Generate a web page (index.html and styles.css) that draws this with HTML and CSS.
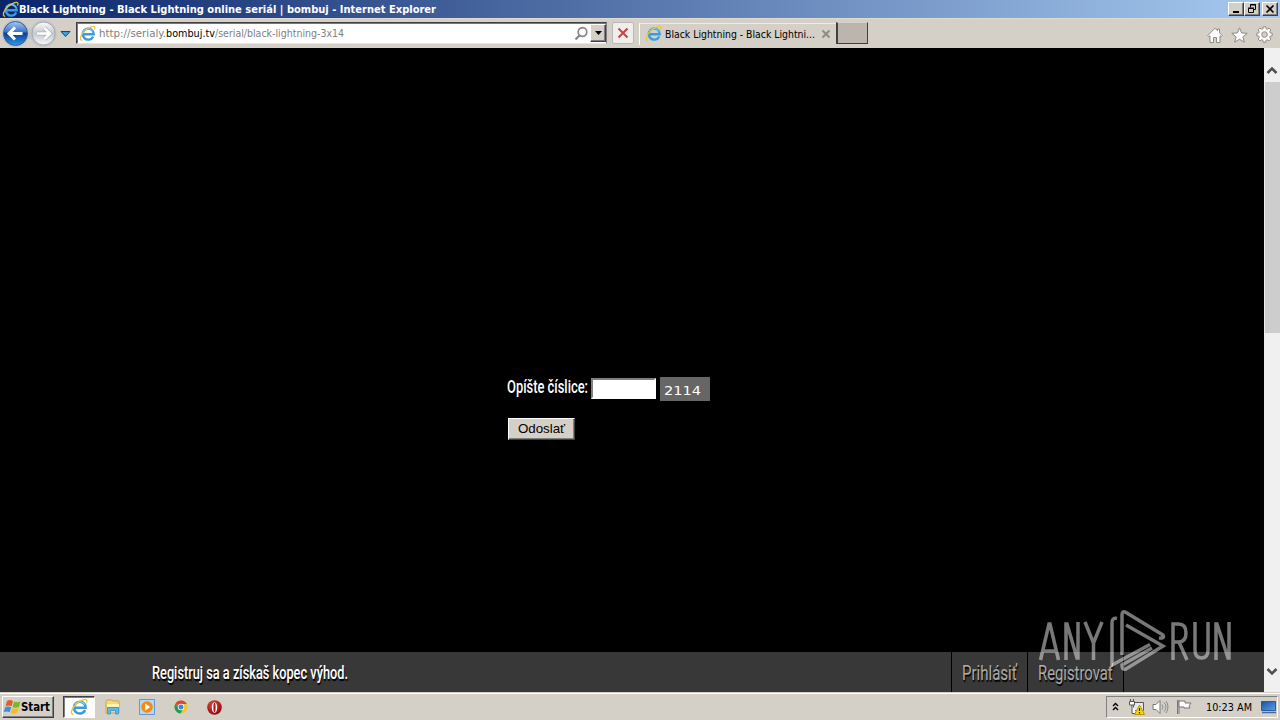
FILE: index.html
```html
<!DOCTYPE html>
<html lang="sk">
<head>
    <meta charset="UTF-8">
    <meta name="viewport" content="width=device-width, initial-scale=1.0">
    <title>Black Lightning - Black Lightning online seriál | bombuj</title>
    <link rel="stylesheet" href="styles.css">
</head>
<body>
    <svg class="defs" width="0" height="0">
        <linearGradient id="blueBall" x1="0" y1="0" x2="0" y2="1">
            <stop offset="0" stop-color="#a9c8ee"/>
            <stop offset=".42" stop-color="#3f78c8"/>
            <stop offset=".5" stop-color="#0b3f98"/>
            <stop offset="1" stop-color="#2b9bea"/>
        </linearGradient>
        <linearGradient id="grayBall" x1="0" y1="0" x2="0" y2="1">
            <stop offset="0" stop-color="#fafbfc"/>
            <stop offset=".5" stop-color="#c3c9d1"/>
            <stop offset="1" stop-color="#f8f9fa"/>
        </linearGradient>
        <linearGradient id="screen" x1="0" y1="0" x2="1" y2="1">
            <stop offset="0" stop-color="#1d4f9f"/>
            <stop offset="1" stop-color="#5ba0ec"/>
        </linearGradient>
        <radialGradient id="redBall" cx=".4" cy=".3" r=".7">
            <stop offset="0" stop-color="#e8483c"/>
            <stop offset="1" stop-color="#8d0a0a"/>
        </radialGradient>
        <symbol id="ie" viewBox="0 0 16 16">
            <path d="M13.400 10.800A5.200 5.200 0 1 1 13.900 8.700H4.500" fill="none" stroke="#3c9bdf" stroke-width="2.200"/>
            <path d="M13 6A5.200 5.200 0 0 0 4.200 5.600" fill="none" stroke="#8dd3f7" stroke-width=".9"/>
            <path d="M3 14.600C-.2 14.200 1.400 8.800 6 5 9.600 1.900 13.800.3 14.800 1.900c.4.700.2 1.600-.3 2.500" fill="none" stroke="#e9c63c" stroke-width="1.200"/>
        </symbol>
    </svg>

    <div class="titlebar">
        <svg class="ie-icon" width="17" height="17"><use href="#ie"/></svg>
        <svg class="title-text" width="430" height="18">
            <text x="0" y="13" textLength="417" lengthAdjust="spacingAndGlyphs">Black Lightning - Black Lightning online seriál | bombuj - Internet Explorer</text>
        </svg>
        <div class="window-buttons">
            <button class="win-btn"><svg width="14" height="12"><path d="M4 9h6" stroke="#000" stroke-width="2"/></svg></button>
            <button class="win-btn"><svg width="14" height="12"><path d="M5.500 4.500V1.500h5v5H9M5 2h6M3.500 5.500h5v4h-5zM3 5h6" fill="none" stroke="#000"/></svg></button>
            <button class="win-btn close"><svg width="14" height="12"><path d="M3.500 2.500l7 7M10.500 2.500l-7 7" stroke="#000" stroke-width="1.700"/></svg></button>
        </div>
    </div>

    <div class="toolbar">
        <svg class="nav-buttons" width="74" height="30">
            <path d="M2 15a13.500 13.500 0 0 1 26-5q1.500 2 3 0a13.500 13.500 0 1 1 0 11q-1.500-1-3 0A13.500 13.500 0 0 1 2 15" fill="#c3c4c5"/>
            <circle cx="15.500" cy="15.500" r="12" fill="url(#blueBall)" stroke="#345f9e"/>
            <path d="M22.500 15.500H10M15 9.500l-6 6 6 6" fill="none" stroke="#fff" stroke-width="3"/>
            <circle cx="43.500" cy="15.500" r="11.500" fill="url(#grayBall)" stroke="#a4a8ad"/>
            <path d="M37 15.500h12M44.500 10l5.500 5.500-5.500 5.500" fill="none" stroke="#aeb3b9" stroke-width="4"/>
            <path d="M37 15.500h12M44.500 10l5.500 5.500-5.500 5.500" fill="none" stroke="#fff" stroke-width="2.600"/>
            <path d="M61 13.500h9l-4.500 5z" fill="#37a4df" stroke="#164776"/>
        </svg>
        <div class="address">
            <svg class="ie-icon" width="17" height="17"><use href="#ie"/></svg>
            <svg class="url" width="300" height="18">
                <text x="0" y="13" textLength="67" lengthAdjust="spacingAndGlyphs">http://serialy.</text>
                <text class="host" x="67" y="13" textLength="49" lengthAdjust="spacingAndGlyphs">bombuj.tv</text>
                <text x="116" y="13" textLength="129" lengthAdjust="spacingAndGlyphs">/serial/black-lightning-3x14</text>
            </svg>
            <svg class="search" width="15" height="16"><circle cx="8.500" cy="6" r="4.300" fill="none" stroke="#858585" stroke-width="1.700"/><path d="M5.500 9.500L1.500 13.500" stroke="#858585" stroke-width="2.200"/></svg>
            <button class="dropdown"><svg width="7" height="4"><path d="M0 0h7L3.500 4z"/></svg></button>
        </div>
        <button class="stop"><svg width="12" height="12"><path d="M1.500 1.500l9 9M10.500 1.500l-9 9" stroke="#c8404a" stroke-width="2"/></svg></button>
        <div class="tab">
            <svg class="ie-icon" width="17" height="17"><use href="#ie"/></svg>
            <svg class="tab-title" width="152" height="18">
                <text x="0" y="12" textLength="150" lengthAdjust="spacingAndGlyphs">Black Lightning - Black Lightni...</text>
            </svg>
            <svg class="tab-close" width="10" height="10"><path d="M1.500 1.500l7 7M8.500 1.500l-7 7" stroke="#8f8b85" stroke-width="2"/></svg>
        </div>
        <div class="new-tab"></div>
        <div class="tools">
            <svg width="16" height="16"><path d="M.8 8.500L8 1.200l2.500 2.500V2h2v3.800l2.700 2.700-1 1.200-1.200-1v6.800H9.500v-5h-3v5H3V8.700l-1.200 1z" fill="#fff" stroke="#8e8a84"/></svg>
            <svg width="17" height="16"><path d="M8.500.8l2.100 5.100 5.600.4-4.300 3.500 1.400 5.400-4.800-3-4.800 3 1.400-5.400L.8 6.300l5.600-.4z" fill="#fff" stroke="#8e8a84"/></svg>
            <svg width="17" height="17" viewBox="0 0 17 17">
                <path d="M7.200.8h2.600l.4 2.100 1 .4L13 2.100l1.900 1.900-1.200 1.800.4 1 2.100.4v2.600l-2.100.4-.4 1 1.200 1.800-1.900 1.900-1.800-1.200-1 .4-.4 2.100H7.200l-.4-2.100-1-.4L4 14.900 2.100 13l1.200-1.800-.4-1-2.100-.4V7.200l2.100-.4.4-1L2.100 4 4 2.100l1.800 1.200 1-.4z" fill="#fff" stroke="#8e8a84"/>
                <circle cx="8.500" cy="8.500" r="2.800" fill="#d4d0c8" stroke="#8e8a84"/>
            </svg>
        </div>
    </div>

    <div class="viewport">
        <div class="page">
            <form class="captcha">
                <div class="captcha-row">
                    <svg class="label" width="84" height="26">
                        <text x="0" y="18" textLength="81" lengthAdjust="spacingAndGlyphs">Opíšte číslice:</text>
                    </svg>
                    <input type="text" class="code-input">
                    <svg class="code" width="50" height="24">
                        <text x="4" y="18" textLength="37" lengthAdjust="spacingAndGlyphs">2114</text>
                    </svg>
                </div>
                <button type="button" class="submit-btn">Odoslať</button>
            </form>
            <div class="bottom-bar">
                <svg class="promo" width="200" height="40">
                    <text x="0" y="27" textLength="196" lengthAdjust="spacingAndGlyphs">Registruj sa a získaš kopec výhod.</text>
                </svg>
                <div class="account">
                    <a class="login"><svg width="56" height="40"><text x="0" y="28" textLength="55" lengthAdjust="spacingAndGlyphs">Prihlásiť</text></svg></a>
                    <a class="register"><svg width="76" height="40"><text x="0" y="28" textLength="75" lengthAdjust="spacingAndGlyphs">Registrovať</text></svg></a>
                </div>
            </div>
            <svg class="watermark" width="196" height="66" viewBox="0 0 196 66">
                <g fill="none" stroke-width="3.500">
                    <path d="M3.500 51L12 15h1l8.500 36M6 42h13"/>
                    <path d="M29 51V15h1l10 34h1V13"/>
                    <path d="M48 13l8.500 21v17M65 13l-8.500 21"/>
                    <path d="M136 51V15h5.500q7.500 0 7.500 9t-7.500 9H136M142 33l8 18"/>
                    <path d="M158 13v28q0 8 6.500 8t6.500-8V13"/>
                    <path d="M179 51V15h1l11 34h1V13"/>
                    <path d="M80 9.500q-5-1-5 4V56l38-20.500"/>
                    <path d="M85 46V6q0-5 4-2.500l37 22.500q2 3.500-4 3"/>
                    <path d="M89 16l37 21-37 23q-4 1.500-4-4l30-17"/>
                </g>
            </svg>
        </div>
        <div class="scrollbar">
            <svg class="arrow-up" width="16" height="34"><path d="M3.500 25L8 20.500l4.500 4.500" fill="none" stroke="#505050" stroke-width="2.500"/></svg>
            <div class="thumb"></div>
            <svg class="arrow-down" width="16" height="34"><path d="M3.500 11L8 15.500l4.500-4.500" fill="none" stroke="#505050" stroke-width="2.500"/></svg>
        </div>
    </div>

    <div class="taskbar">
        <button class="start">
            <svg width="17" height="16" viewBox="0 0 17 16">
                <path d="M3 2q3-2 6 0L7.500 7.200q-3-1.500-6 0z" fill="#e65b28"/>
                <path d="M10 2.500q3 1.600 6.500 0L15 8q-3.500 1.500-6.500 0z" fill="#77b82a"/>
                <path d="M1.200 8.300q3-1.600 6 0l-1.500 5q-3-1.600-6 0z" fill="#3f8fdc"/>
                <path d="M8.200 8.900q3 1.600 6.500 0l-1.500 5q-3.500 1.600-6.500 0z" fill="#f6bd22"/>
            </svg>
            <svg width="31" height="18"><text x="0" y="13" textLength="29" lengthAdjust="spacingAndGlyphs">Start</text></svg>
        </button>
        <div class="task active"><svg width="18" height="18"><use href="#ie"/></svg></div>
        <div class="task">
            <svg width="16" height="16"><path d="M1 2.500Q1 1 3 1h4l1 1h6v12H1z" fill="#f1d87a" stroke="#c7a84a"/><path d="M2 5h12v3H2z" fill="#fff3b0"/><path d="M2.500 15V8.500h11V15h-3v-3.500h-5V15z" fill="#65b5e7" stroke="#439bd0"/></svg>
        </div>
        <div class="task">
            <svg width="16" height="16"><path d="M.5.5h15v15H.5z" fill="#b8d5f1" stroke="#5c9bd6"/><circle cx="8" cy="8" r="5.800" fill="#f58a13"/><path d="M6.200 4.500l5 3.500-5 3.500z" fill="#fff"/></svg>
        </div>
        <div class="task">
            <svg width="14" height="14" viewBox="0 0 14 14"><circle cx="7" cy="7" r="6.500" fill="#f6c62c"/><path d="M1.400 3.700A6.500 6.500 0 0 0 6.500 13.500L9 9 5 8z" fill="#24994f"/><path d="M1.400 3.700A6.500 6.500 0 0 1 12.800 4H7L5 7z" fill="#db4437"/><circle cx="7" cy="7" r="3.200" fill="#fff"/><circle cx="7" cy="7" r="2.500" fill="#4285e8"/></svg>
        </div>
        <div class="task opera">
            <svg width="15" height="15"><circle cx="7.500" cy="7.500" r="7.300" fill="url(#redBall)"/><ellipse cx="7.500" cy="7.500" rx="2.700" ry="5.300" fill="#fff"/><ellipse cx="7.500" cy="7.500" rx="1.100" ry="4.700" fill="#b51515"/></svg>
        </div>
        <div class="tray">
            <svg class="chevrons" width="7" height="10"><path d="M1 4L3.500 1.500 6 4M1 8L3.500 5.500 6 8" fill="none" stroke="#000" stroke-width="1.400"/></svg>
            <svg class="network" width="16" height="16"><path d="M4.500 3.500h10v8h-10z" fill="#e8e8e8" stroke="#555"/><path d="M.5 2.500h5v3.500h-5zM1.500 2V0M4.500 2V0M3 6v8.500h5" fill="#fff" stroke="#555"/><path d="M10.500 6l5 9.500h-10z" fill="#f6d419" stroke="#b79605"/><path d="M10.500 9v3M10.500 13v1.500" stroke="#222" stroke-width="1.200"/></svg>
            <svg class="sound" width="17" height="16"><path d="M1 5.500h3l4-4v13l-4-4H1z" fill="#fff" stroke="#777"/><path d="M10 5.500q2 2.500 0 5M12 3.500q4 4.500 0 9M14 2q4 6 0 12" fill="none" stroke="#8c8c8c"/></svg>
            <svg class="flag" width="17" height="16"><path d="M1.500 1v14M3 1v14" stroke="#777"/><path d="M3 2h6v2h6l-2 3 1 2H8V8H3z" fill="#fff" stroke="#777"/></svg>
            <svg class="clock" width="48" height="18"><text x="0" y="13" textLength="46" lengthAdjust="spacingAndGlyphs">10:23 AM</text></svg>
            <svg class="desktop" width="15" height="13"><path d="M.5.5h14v9H.5z" fill="url(#screen)" stroke="#275a9f"/><path d="M1 11.500h14" stroke="#456b9c" stroke-width="1.500"/></svg>
        </div>
    </div>
</body>
</html>
```
FILE: styles.css
```css
* {
    box-sizing: border-box;
}

body {
    margin: 0;
    width: 1280px;
    height: 720px;
    overflow: hidden;
    display: flex;
    flex-direction: column;
    font-family: "DejaVu Sans Condensed", "DejaVu Sans", Tahoma, sans-serif;
    font-size: 11px;
    background: #d4d0c8;
}

svg {
    display: block;
    flex: none;
    overflow: visible;
}

.defs {
    position: absolute;
}

button {
    padding: 0;
    border: 0;
    font: inherit;
    display: flex;
    align-items: center;
    justify-content: center;
    flex: none;
}

/* title bar */
.titlebar {
    height: 18px;
    flex: none;
    display: flex;
    background: linear-gradient(to right, #0a246a, #a6caf0);
    padding-left: 2px;
}

.titlebar .ie-icon {
    margin-top: 1px;
}

.title-text {
    fill: #fff;
    font-weight: bold;
}

.window-buttons {
    display: flex;
    margin: 2px 2px 0 auto;
}

.win-btn {
    width: 16px;
    height: 14px;
    background: #d4d0c8;
    border: 1px solid;
    border-color: #fff #404040 #404040 #fff;
    box-shadow: inset -1px -1px #808080;
}

.win-btn.close {
    margin-left: 2px;
}

/* toolbar */
.toolbar {
    height: 30px;
    flex: none;
    display: flex;
    border-top: 1px solid #dedbd5;
    background: #d4d0c8;
}

.nav-buttons {
    margin: -1px 2px 0 0;
}

.address {
    width: 531px;
    height: 22px;
    margin-top: 3px;
    display: flex;
    align-items: center;
    background: #fff;
    border: 1px solid;
    border-color: #404040 #808080 #e8e5df #404040;
    box-shadow: inset 1px 1px #777;
    padding-left: 2px;
}

.url {
    fill: #808080;
    margin-left: 3px;
}

.url .host {
    fill: #000;
}

.search {
    margin: 1px 1px 0 auto;
}

.dropdown {
    width: 16px;
    height: 18px;
    background: #d4d0c8;
    border: 1px solid;
    border-color: #fff #404040 #404040 #fff;
    box-shadow: inset -1px -1px #808080;
}

.stop {
    width: 22px;
    height: 22px;
    margin: 3px 0 0 5px;
    background: #f0eeeb;
    border: 1px solid #bcb9b4;
    border-radius: 2px;
}

.tab {
    width: 197px;
    height: 22px;
    margin: 4px 0 0 5px;
    padding-left: 5px;
    display: flex;
    align-items: center;
    border-top: 1px solid #eeece8;
    border-left: 1px solid #fff;
}

.tab .ie-icon {
    margin-top: -2px;
}

.tab-title {
    margin-left: 3px;
}

.tab-close {
    margin: -2px 0 0 4px;
}

.new-tab {
    width: 32px;
    height: 22px;
    margin-top: 3px;
    background: #bbb5ae;
    border: 1px solid #404040;
    border-top-color: #d4d0c8;
    border-left-width: 2px;
}

.tools {
    display: flex;
    align-items: center;
    gap: 8px;
    margin: 2px 7px 0 auto;
}

/* page */
.viewport {
    height: 644px;
    flex: none;
    display: flex;
}

.page {
    position: relative;
    width: 1264px;
    background: #000;
    display: flex;
    flex-direction: column;
}

.captcha {
    margin: 329px 0 0 507px;
}

.captcha-row {
    display: flex;
}

.label,
.bottom-bar {
    font-family: Roboto, "Open Sans", sans-serif;
    font-size: 18.5px;
}

.label {
    fill: #fff;
    font-weight: 500;
    margin-top: -2px;
}

.code-input {
    width: 65px;
    height: 21px;
    margin: 1px 4px 0 0;
    padding: 1px;
    background: #fff;
    border: 2px solid;
    border-color: #808080 #fff #fff #808080;
    border-radius: 0;
}

.code {
    background: #666;
    fill: #fff;
    font-family: "DejaVu Sans", sans-serif;
    font-size: 13px;
}

.submit-btn {
    width: 67px;
    height: 22px;
    margin: 17px 0 0 1px;
    padding-bottom: 2px;
    color: #000;
    background: #d4d0c8;
    border: 1px solid;
    border-color: #fff #404040 #404040 #fff;
    box-shadow: inset -1px -1px #808080;
    font-family: "Liberation Sans", Arial, sans-serif;
    font-size: 13.33px;
}

.bottom-bar {
    height: 40px;
    margin-top: auto;
    display: flex;
    background: #383838;
    padding-left: 152px;
}

.bottom-bar text {
    text-shadow: 1px 2px 1px #000;
}

.promo {
    fill: #fff;
    font-weight: 500;
}

.account {
    display: flex;
    margin-left: auto;
    margin-right: 140px;
    fill: #aaa;
    font-size: 20px;
    border-right: 1px solid #000;
}

.login,
.register {
    border-left: 1px solid #000;
    padding-left: 10px;
}

.login {
    width: 76px;
}

.register {
    width: 96px;
}

.watermark {
    position: absolute;
    left: 1037px;
    top: 561px;
    stroke: #fff;
    opacity: .47;
}

.scrollbar {
    width: 16px;
    background: #f0f0f0;
    display: flex;
    flex-direction: column;
}

.thumb {
    height: 251px;
    margin-left: 1px;
    background: #cdcdcd;
}

.arrow-down {
    margin-top: auto;
}

/* taskbar */
.taskbar {
    height: 28px;
    flex: none;
    display: flex;
    border-top: 1px solid #d4d0c8;
    box-shadow: inset 0 1px #fff;
    padding: 3px 2px 2px;
}

.start {
    width: 52px;
    height: 22px;
    margin-right: 9px;
    background: #d4d0c8;
    border: 1px solid;
    border-color: #fff #404040 #404040 #fff;
    box-shadow: inset -1px -1px #808080;
    font-weight: bold;
    font-size: 12px;
}

.task {
    width: 34px;
    height: 22px;
    display: flex;
    align-items: center;
    justify-content: center;
}

.task.active {
    width: 32px;
    margin-right: 1px;
    background: #fff;
    border: 1px solid;
    border-color: #404040 #fff #fff #404040;
    box-shadow: inset 1px 1px #808080;
}

.task.opera {
    width: 32px;
}

.tray {
    width: 172px;
    height: 22px;
    margin-left: auto;
    display: flex;
    align-items: center;
    border: 1px solid;
    border-color: #808080 #fff #fff #808080;
    padding-left: 5px;
}

.network {
    margin-left: 10px;
}

.sound {
    margin-left: 7px;
}

.flag {
    margin-left: 7px;
}

.clock {
    margin-left: 13px;
}

.desktop {
    margin-left: 7px;
}
```
